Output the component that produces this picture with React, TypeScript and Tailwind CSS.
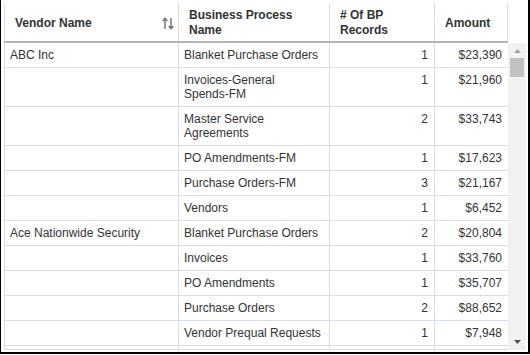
import type { ReactNode } from 'react'

type Row = {
  vendor: string
  process: string[]
  count: number
  amount: string
}

const rows: Row[] = [
  { vendor: 'ABC Inc', process: ['Blanket Purchase Orders'], count: 1, amount: '$23,390' },
  { vendor: '', process: ['Invoices-General', 'Spends-FM'], count: 1, amount: '$21,960' },
  { vendor: '', process: ['Master Service', 'Agreements'], count: 2, amount: '$33,743' },
  { vendor: '', process: ['PO Amendments-FM'], count: 1, amount: '$17,623' },
  { vendor: '', process: ['Purchase Orders-FM'], count: 3, amount: '$21,167' },
  { vendor: '', process: ['Vendors'], count: 1, amount: '$6,452' },
  { vendor: 'Ace Nationwide Security', process: ['Blanket Purchase Orders'], count: 2, amount: '$20,804' },
  { vendor: '', process: ['Invoices'], count: 1, amount: '$33,760' },
  { vendor: '', process: ['PO Amendments'], count: 1, amount: '$35,707' },
  { vendor: '', process: ['Purchase Orders'], count: 2, amount: '$88,652' },
  { vendor: '', process: ['Vendor Prequal Requests'], count: 1, amount: '$7,948' },
]

const SortIcon = () => (
  <svg width="12" height="13" viewBox="0 0 12 13" fill="none" stroke="#6f6f6f" strokeWidth="1.4">
    <path d="M3 12V1.5M0.7 4L3 1.3L5.3 4" />
    <path d="M9 1V11.5M6.7 9L9 11.7L11.3 9" />
  </svg>
)

const HeadCell = ({ className, children }: { className: string; children: ReactNode }) => (
  <div className={`flex items-center border-r border-[#dadfe6] pl-[10px] pt-[2px] font-bold leading-[15px] ${className}`}>
    {children}
  </div>
)

const BodyRow = ({ row }: { row: Row }) => (
  <div className="flex border-b border-[#d6dde6] leading-[14px]">
    <div className="w-[174px] shrink-0 border-r border-[#d6dde6] px-[5px] py-[5px] whitespace-nowrap">
      {row.vendor}
    </div>
    <div className="w-[151px] shrink-0 border-r border-[#d6dde6] px-[5px] py-[5px] whitespace-nowrap">
      {row.process.map((line, i) => (
        <div key={i}>{line}</div>
      ))}
    </div>
    <div className="w-[105px] shrink-0 border-r border-[#d6dde6] pr-[6px] py-[5px] text-right">{row.count}</div>
    <div className="w-[73px] shrink-0 pr-[6px] py-[5px] text-right">{row.amount}</div>
  </div>
)

export default function App() {
  return (
    <div className="w-[530px] h-[354px] bg-white border-l border-r-2 border-b-2 border-black pl-[3px] pr-[2px] pt-[3px] flex flex-col font-['Liberation_Sans',Arial,sans-serif] text-[12px] text-[#333]">
      <div className="flex">
        <div className="w-[504px] h-[40px] flex border-l border-b-2 border-l-[#d6dde6] border-b-[#b4b4b4]">
          <HeadCell className="w-[174px] justify-between pr-[4px]">
            <span>Vendor Name</span>
            <SortIcon />
          </HeadCell>
          <HeadCell className="w-[151px]">
            <span>
              Business Process
              <br />
              Name
            </span>
          </HeadCell>
          <HeadCell className="w-[105px]">
            <span>
              # Of BP
              <br />
              Records
            </span>
          </HeadCell>
          <HeadCell className="w-[73px]">
            <span>Amount</span>
          </HeadCell>
        </div>
        <div className="w-[18px]" />
      </div>
      <div className="flex">
        <div className="w-[504px] h-[307px] overflow-hidden border-l border-b border-[#d6dde6]">
          {rows.map((row, i) => (
            <BodyRow key={i} row={row} />
          ))}
          <div className="flex h-[24px]">
            <div className="w-[174px] shrink-0 border-r border-[#d6dde6]" />
            <div className="w-[151px] shrink-0 border-r border-[#d6dde6]" />
            <div className="w-[105px] shrink-0 border-r border-[#d6dde6]" />
          </div>
        </div>
        <div className="w-[18px] h-[307px] bg-[#f1f1f1] flex flex-col items-center pt-[6px] pb-[6px]">
          <svg width="7" height="4" viewBox="0 0 7 4">
            <path d="M0 4L3.5 0L7 4Z" fill="#a3a3a3" />
          </svg>
          <div className="mt-[5px] w-[14px] h-[19px] bg-[#c1c1c1]" />
          <div className="flex-1" />
          <svg width="7" height="4" viewBox="0 0 7 4">
            <path d="M0 0L7 0L3.5 4Z" fill="#505050" />
          </svg>
        </div>
      </div>
    </div>
  )
}
